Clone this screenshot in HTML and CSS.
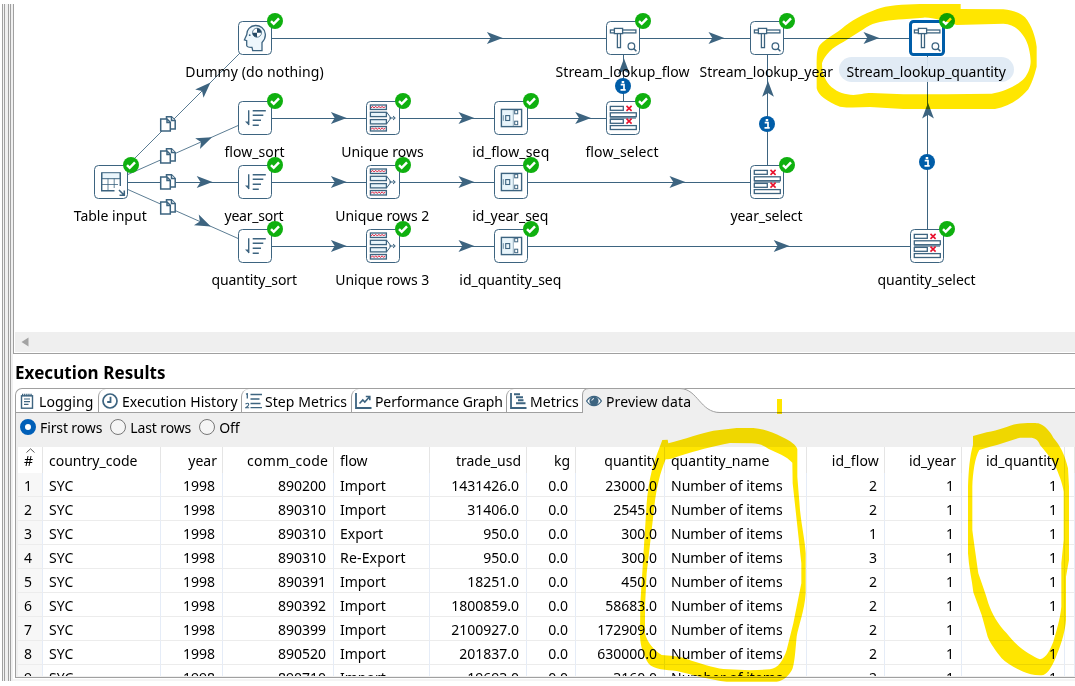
FILE: index.html
```
<!DOCTYPE html>
<html lang="en">
<head>
<meta charset="utf-8">
<title>Execution Results</title>
<link rel="stylesheet" href="styles.css">
</head>
<body>
<div class="app">
  <div class="sash"><i></i><i></i></div>
  <main class="workspace">
    <section class="canvas">
      <svg class="graph" width="1061" height="328" viewBox="14 4 1061 328">
        <defs>
          <g id="ok"><circle r="8" fill="#0fb00f"/><path d="M-4 0.2L-1.3 2.8L4 -2.6" fill="none" stroke="#fff" stroke-width="2.5"/></g>
          <g id="info"><circle r="8" fill="#005da8"/><path d="M-2.3 -1.3H1V3.7M-2.5 3.8H2.7" fill="none" stroke="#fff" stroke-width="1.7"/><rect x="-1.3" y="-5" width="2.5" height="2.2" fill="#fff"/></g>
          <path id="arrow" d="M0 0L-15.8 -5.9L-12 0L-15.8 5.9Z" fill="#3d6480"/>
          <rect id="box" x="-16.5" y="-16.5" width="33" height="33" rx="4" fill="#fff" stroke="#3d6480"/>
          <g id="copy" fill="#fff" stroke="#3d6480" stroke-width="1.5"><path d="M-1.5 -7.2H3.5L7.2 -3.5V5H-1.5Z"/><path d="M3.5 -7V-3.5H7"/><path d="M-7.3 -5H-1L2.3 -1.7V7H-7.3Z"/><path d="M-1 -5V-1.5H2.3" fill="none"/></g>
          <g id="i-table" fill="none" stroke="#3d6480"><rect x="-9.3" y="-9.3" width="18.6" height="6" fill="#eaf5fb"/><path d="M9.3 -9.3V4M-9.3 -9.3V8.8H3.5" stroke-width="1.4"/><path d="M-9 2.5H7M-3 -3.5V8.5M3.2 -3.5V6" stroke-width=".8"/><path d="M8 8L13 13M13.3 8.5V13.3H8.5" stroke-width="1.5"/></g>
          <g id="i-head"><path d="M7 12.6V4.5C9.5 2 10.6 -1 10.3 -4C9.6 -10 5 -12.6 0.5 -12.5C-5 -12.3 -8.3 -8 -8.2 -3.5L-10.6 1.8L-8.3 2.7V7.5Q-8 9.5 -3 9.3L-2.3 12.6Z" fill="#eef7fc" stroke="#3d6480" stroke-width="1.3"/><circle cx="2" cy="-5.3" r="4.5" fill="#fff" stroke="#3d6480" stroke-width=".8"/><path d="M2 -5.3V-9.8A4.5 4.5 0 0 1 6.5 -5.3ZM2 -5.3V-.8A4.5 4.5 0 0 1 -2.5 -5.3Z" fill="#274a65"/><circle cx="-5.3" cy="-2.8" r=".9" fill="#3d6480"/></g>
          <g id="i-sort" stroke="#3d6480" stroke-width="1.4"><path d="M-6.3 -7.8V7M-2.3 -7.3H10.8M-2.3 -2.7H8.3M-2.3 2.3H6M-2.3 7.3H3.8"/><path d="M-10 3.6H-6V7.6Z" fill="#3d6480" stroke="none"/></g>
          <g id="i-unique" fill="#e9f5fb" stroke="#3d6480" stroke-width="1.3"><rect x="-12.6" y="-13" width="16" height="4.5"/><rect x="-12.6" y="-5.7" width="16" height="4.3"/><rect x="-12.6" y="1.6" width="16" height="4.3"/><rect x="-12.6" y="8.5" width="16" height="4.5"/><path d="M-12 -10l1.5 -1.7 1.6 1.7 1.6 -1.7 1.6 1.7 1.6 -1.7 1.6 1.7 1.6 -1.7 1.6 1.7 1.6 -1.7M-12 11.5l1.5 -1.7 1.6 1.7 1.6 -1.7 1.6 1.7 1.6 -1.7 1.6 1.7 1.6 -1.7 1.6 1.7 1.6 -1.7" fill="none" stroke="#e8112d" stroke-width=".9"/><path d="M3.5 -6L8 0L3.5 6M6 0H12M10 -2L12.3 0L10 2" fill="none" stroke-width="1"/></g>
          <g id="i-seq" fill="none" stroke="#3d6480"><path d="M-9 -8H2.5V8H-9Z" fill="#e9f5fb" stroke="none"/><rect x="-9.6" y="-8.6" width="20.2" height="17.2" stroke-width="1.4"/><path d="M2.3 -8V8" stroke-width=".5"/><rect x="-5.3" y="-2.4" width="4" height="4.9" stroke-width="1.1"/><path d="M-7.7 -2.8V2.8" stroke-width=".7"/><rect x="3.7" y="-7.7" width="3" height="3.5"/><rect x="3.7" y="3.2" width="3" height="3.5"/></g>
          <g id="i-select" fill="#fff" stroke="#3d6480" stroke-width="1.3"><path d="M-13 -1H13V1H-13Z" fill="#8ba2b3" stroke="none"/><rect x="-12.7" y="-11.6" width="13" height="3.9"/><rect x="-12.7" y="-5.2" width="26" height="3.9"/><rect x="-12.7" y="1.4" width="13" height="3.9"/><rect x="-12.7" y="7.6" width="26" height="3.9"/><path d="M3.5 -12.1L8.6 -7.2M8.6 -12.1L3.5 -7.2M3.5 .7L8.6 5.6M8.6 .7L3.5 5.6" stroke="#e8112d" stroke-width="1.6"/></g>
          <g id="i-lookup" fill="#fff" stroke="#3d6480" stroke-width="1.3"><rect x="-12.6" y="-8" width="25.5" height="2.9"/><rect x="-8.6" y="-9.6" width="8.2" height="5.2"/><rect x="-5.6" y="-4.4" width="3.1" height="14"/><circle cx="8.4" cy="8.2" r="3.3"/><path d="M10.8 10.6L13.4 13.2" stroke-width="1.5"/></g>
        </defs>

        <g stroke="#3d6480" stroke-width="1">
          <path d="M111 182L255 38M111 182L255 118M111 182L255 246" fill="none" stroke-width=".85"/>
          <path d="M111 182.5H767M255 38.5H927M255 118.5H623M255 246.5H927M623.5 118V38M767.5 182V38M927.5 246V38" fill="none"/>
        </g>
        <use href="#arrow" transform="translate(210.5 82.5) rotate(-45)"/>
        <use href="#arrow" transform="translate(212 137.2) rotate(-24)"/>
        <use href="#arrow" x="212.5" y="182"/>
        <use href="#arrow" transform="translate(210.8 226.4) rotate(24)"/>
        <use href="#arrow" x="502.7" y="38"/><use href="#arrow" x="724.3" y="38"/><use href="#arrow" x="879.3" y="38"/>
        <use href="#arrow" x="346.7" y="118"/><use href="#arrow" x="474.3" y="118"/><use href="#arrow" x="591" y="118"/>
        <use href="#arrow" x="346.7" y="182"/><use href="#arrow" x="474.3" y="182"/><use href="#arrow" x="685.3" y="182"/>
        <use href="#arrow" x="346.7" y="246"/><use href="#arrow" x="474.3" y="246"/><use href="#arrow" x="789.5" y="246"/>
        <use href="#arrow" transform="translate(624 58.5) rotate(-90)"/>
        <use href="#arrow" transform="translate(768 81) rotate(-90)"/>
        <use href="#arrow" transform="translate(928 102.7) rotate(-90)"/>
        <use href="#copy" x="168" y="124"/><use href="#copy" x="168" y="156"/><use href="#copy" x="168" y="182"/><use href="#copy" x="168" y="207"/>
        <use href="#info" x="623" y="86"/><use href="#info" x="767" y="124"/><use href="#info" x="927" y="162"/>

        <rect x="839" y="57" width="175" height="25" rx="12.5" fill="#dfeaf4" fill-opacity=".93"/>
        <g class="node-label">
          <text x="185.3" y="77" textLength="138.4">Dummy (do nothing)</text>
          <text x="555.5" y="77" textLength="134">Stream_lookup_flow</text>
          <text x="699.5" y="77" textLength="133.5">Stream_lookup_year</text>
          <text x="846.5" y="77" textLength="159.5">Stream_lookup_quantity</text>
          <text x="224.5" y="157" textLength="60">flow_sort</text>
          <text x="341.2" y="157" textLength="82.5">Unique rows</text>
          <text x="472.3" y="157" textLength="77">id_flow_seq</text>
          <text x="585.5" y="157" textLength="73">flow_select</text>
          <text x="73.7" y="221" textLength="73">Table input</text>
          <text x="224.5" y="221" textLength="59">year_sort</text>
          <text x="335.3" y="221" textLength="94">Unique rows 2</text>
          <text x="472.3" y="221" textLength="76">id_year_seq</text>
          <text x="730.5" y="221" textLength="72">year_select</text>
          <text x="211.5" y="285" textLength="85.5">quantity_sort</text>
          <text x="335.3" y="285" textLength="94">Unique rows 3</text>
          <text x="459.3" y="285" textLength="102">id_quantity_seq</text>
          <text x="877.5" y="285" textLength="98">quantity_select</text>
        </g>

        <g transform="translate(111 182)"><use href="#box"/><use href="#i-table"/><use href="#ok" x="20" y="-17"/></g>
        <g transform="translate(255 38)"><use href="#box"/><use href="#i-head"/><use href="#ok" x="20" y="-17"/></g>
        <g transform="translate(255 118)"><use href="#box"/><use href="#i-sort"/><use href="#ok" x="20" y="-17"/></g>
        <g transform="translate(255 182)"><use href="#box"/><use href="#i-sort"/><use href="#ok" x="20" y="-17"/></g>
        <g transform="translate(255 246)"><use href="#box"/><use href="#i-sort"/><use href="#ok" x="20" y="-17"/></g>
        <g transform="translate(383 118)"><use href="#box"/><use href="#i-unique"/><use href="#ok" x="20" y="-17"/></g>
        <g transform="translate(383 182)"><use href="#box"/><use href="#i-unique"/><use href="#ok" x="20" y="-17"/></g>
        <g transform="translate(383 246)"><use href="#box"/><use href="#i-unique"/><use href="#ok" x="20" y="-17"/></g>
        <g transform="translate(511 118)"><use href="#box"/><use href="#i-seq"/><use href="#ok" x="20" y="-17"/></g>
        <g transform="translate(511 182)"><use href="#box"/><use href="#i-seq"/><use href="#ok" x="20" y="-17"/></g>
        <g transform="translate(511 246)"><use href="#box"/><use href="#i-seq"/><use href="#ok" x="20" y="-17"/></g>
        <g transform="translate(623 118)"><use href="#box"/><use href="#i-select"/><use href="#ok" x="20" y="-17"/></g>
        <g transform="translate(767 182)"><use href="#box"/><use href="#i-select"/><use href="#ok" x="20" y="-17"/></g>
        <g transform="translate(927 246)"><use href="#box"/><use href="#i-select"/><use href="#ok" x="20" y="-17"/></g>
        <g transform="translate(623 38)"><use href="#box"/><use href="#i-lookup"/><use href="#ok" x="20" y="-17"/></g>
        <g transform="translate(767 38)"><use href="#box"/><use href="#i-lookup"/><use href="#ok" x="20" y="-17"/></g>
        <g transform="translate(927 38)"><rect x="-16.5" y="-16.5" width="33" height="33" rx="3" fill="#fff" stroke="#005da8" stroke-width="3"/><use href="#i-lookup"/><use href="#ok" x="20" y="-17"/></g>
      </svg>
      <div class="scrollbar"><svg width="8" height="10"><path d="M7.5 .5V9.5L0.5 5Z" fill="#a3a3a3"/></svg></div>
    </section>

    <h1 class="title"><span>Execution Results</span></h1>

    <section class="folder">
      <nav class="tabs">
        <div class="tab t-log"><svg width="16" height="16" viewBox="0 0 16 16" fill="none" stroke="#3d6480"><rect x="2.5" y="2.8" width="11" height="12.4" stroke-width="1.4"/><path d="M3 2H13" stroke-width="2.4" stroke-dasharray="1.3 .8"/><path d="M5 6H11M5 8.7H11M5 11.4H9.5" stroke-width="1.2"/></svg><span>Logging</span></div>
        <div class="tab t-hist"><svg width="16" height="16" viewBox="0 0 16 16" fill="none" stroke="#3d6480"><circle cx="8" cy="8" r="7" stroke-width="1.7"/><path d="M8.5 3.8V9H5.2" stroke-width="1.8"/></svg><span>Execution History</span></div>
        <div class="tab t-step"><svg width="17" height="16" viewBox="0 0 17 16" fill="none" stroke="#3d6480" stroke-width="1.3"><path d="M1 1.2L2.3 .8V5.5M5.5 1.5H17M5.5 6H14.5M5.5 10.5H15.5M5.5 14.7H17"/><path d="M.5 11Q3.7 9.2 3.7 11.4Q3.7 12.7 .8 14.7H4.2" stroke-width="1.1"/></svg><span>Step Metrics</span></div>
        <div class="tab t-perf"><svg width="17" height="16" viewBox="0 0 17 16" fill="none" stroke="#3d6480"><path d="M1 0V15H16.5" stroke-width="1.8"/><path d="M4.5 10.5L7.8 7L9.8 9L14.5 3.8M10.8 3.5H14.8V7.2" stroke-width="1.6"/></svg><span>Performance Graph</span></div>
        <div class="tab t-metr"><svg width="17" height="16" viewBox="0 0 17 16" fill="none" stroke="#3d6480"><path d="M1 0V15H16.5" stroke-width="1.8"/><path d="M4 1.2H10M6 4.2H13M8 7.2H13.5M6 10.2H15.5" stroke-width="1.9"/></svg><span>Metrics</span></div>
        <div class="tab t-prev"><svg class="shape" width="139" height="25" viewBox="0 0 139 25"><path d="M.5 25V7Q.5 .5 7 .5H100C116 1 117 24.5 138 24.5V25Z" fill="#efefef"/><path d="M.5 25V7Q.5 .5 7 .5H98C116 1 118 24.5 138 24.5" fill="none" stroke="#a0a0a0"/></svg><svg width="16" height="16" viewBox="0 0 16 16"><path d="M.6 8C4.5 1.8 11.5 1.8 15.4 8C11.5 14.2 4.5 14.2 .6 8Z" fill="#fff" stroke="#3d6480" stroke-width="1.3"/><circle cx="8" cy="8" r="4.6" fill="#3d6480"/><path d="M5.8 7.6Q6 5.7 8 5.6" fill="none" stroke="#fff"/></svg><span>Preview data</span></div>
      </nav>

      <div class="panel">
        <div class="radios">
          <label><i class="radio on"></i><span>First rows</span></label>
          <label><i class="radio"></i><span>Last rows</span></label>
          <label><i class="radio"></i><span>Off</span></label>
        </div>
        <div class="grid-wrap">
          <table class="grid">
            <colgroup><col class="c0"><col class="c1"><col class="c2"><col class="c3"><col class="c4"><col class="c5"><col class="c6"><col class="c7"><col class="c8"><col class="c9"><col class="c10"><col class="c11"><col></colgroup>
            <thead>
              <tr><th class="num">#<svg class="caret" width="9" height="5"><path d="M.5 4.5L4.5 .8L8.5 4.5" fill="none" stroke="#555"/></svg></th><th>country_code</th><th class="r">year</th><th class="r wide">comm_code</th><th>flow</th><th class="r">trade_usd</th><th class="r">kg</th><th class="r">quantity</th><th>quantity_name</th><th class="r wide">id_flow</th><th class="r">id_year</th><th class="r">id_quantity</th><th></th></tr>
            </thead>
            <tbody>
              <tr><td>1</td><td class="cc">SYC</td><td class="r">1998</td><td class="r">890200</td><td>Import</td><td class="r">1431426.0</td><td class="r">0.0</td><td class="r">23000.0</td><td>Number of items</td><td class="r">2</td><td class="r">1</td><td class="r">1</td><td></td></tr>
              <tr><td>2</td><td class="cc">SYC</td><td class="r">1998</td><td class="r">890310</td><td>Import</td><td class="r">31406.0</td><td class="r">0.0</td><td class="r">2545.0</td><td>Number of items</td><td class="r">2</td><td class="r">1</td><td class="r">1</td><td></td></tr>
              <tr><td>3</td><td class="cc">SYC</td><td class="r">1998</td><td class="r">890310</td><td>Export</td><td class="r">950.0</td><td class="r">0.0</td><td class="r">300.0</td><td>Number of items</td><td class="r">1</td><td class="r">1</td><td class="r">1</td><td></td></tr>
              <tr><td>4</td><td class="cc">SYC</td><td class="r">1998</td><td class="r">890310</td><td class="re">Re-Export</td><td class="r">950.0</td><td class="r">0.0</td><td class="r">300.0</td><td>Number of items</td><td class="r">3</td><td class="r">1</td><td class="r">1</td><td></td></tr>
              <tr><td>5</td><td class="cc">SYC</td><td class="r">1998</td><td class="r">890391</td><td>Import</td><td class="r">18251.0</td><td class="r">0.0</td><td class="r">450.0</td><td>Number of items</td><td class="r">2</td><td class="r">1</td><td class="r">1</td><td></td></tr>
              <tr><td>6</td><td class="cc">SYC</td><td class="r">1998</td><td class="r">890392</td><td>Import</td><td class="r">1800859.0</td><td class="r">0.0</td><td class="r">58683.0</td><td>Number of items</td><td class="r">2</td><td class="r">1</td><td class="r">1</td><td></td></tr>
              <tr><td>7</td><td class="cc">SYC</td><td class="r">1998</td><td class="r">890399</td><td>Import</td><td class="r">2100927.0</td><td class="r">0.0</td><td class="r">172909.0</td><td>Number of items</td><td class="r">2</td><td class="r">1</td><td class="r">1</td><td></td></tr>
              <tr><td>8</td><td class="cc">SYC</td><td class="r">1998</td><td class="r">890520</td><td>Import</td><td class="r">201837.0</td><td class="r">0.0</td><td class="r">630000.0</td><td>Number of items</td><td class="r">2</td><td class="r">1</td><td class="r">1</td><td></td></tr>
              <tr><td>9</td><td class="cc">SYC</td><td class="r">1998</td><td class="r">890710</td><td>Import</td><td class="r">19693.0</td><td class="r">0.0</td><td class="r">3160.0</td><td>Number of items</td><td class="r">2</td><td class="r">1</td><td class="r">1</td><td></td></tr>
            </tbody>
          </table>
        </div>
      </div>
    </section>
  </main>
</div>

<!-- Highlighter marks -->
<svg class="marker" width="1075" height="686" viewBox="0 0 1075 686" fill="#ffe600" fill-rule="evenodd">
  <path transform="translate(690 0) scale(.33333)" d="M812 12H690C640 13 590 16 560 28C520 42 480 65 455 86C430 105 395 125 388 137C380 150 380 170 380 200V265C384 285 410 305 450 320C480 325 510 322 540 321L640 327H915C955 320 990 298 1015 268C1030 240 1036 215 1040 200V140C1036 110 1025 75 1005 52C990 38 965 30 940 28L812 27ZM640 58C600 60 560 66 540 76C510 93 490 108 460 126C430 140 403 165 396 190C396 220 406 245 425 262C445 278 465 284 490 285C510 284 520 279 545 279L640 283H770L905 281C940 276 985 255 1003 235C1015 220 1022 200 1022 183C1021 160 1015 130 1003 112C990 90 970 72 940 71L800 75C770 65 720 50 700 53Z"/>
  <path transform="translate(600 420) scale(.33333)" d="M187 60L203 59L205 70C250 58 310 38 340 32L410 24H460C490 26 520 38 545 50C570 62 590 75 592 88V170L600 270C605 320 615 360 617 400V520C614 570 595 620 590 650C586 690 585 720 578 745C570 765 550 784 530 785H380C330 780 280 765 230 753C200 750 160 750 145 730C130 705 122 680 120 650L121 550L128 440L140 250C145 190 155 145 170 105ZM197 118C180 160 170 200 163 260L140 460L135 560V640C140 665 165 695 185 705C210 708 230 706 260 717C300 730 340 744 370 747L450 751L510 748C535 745 550 720 560 690L580 610L604 490V430L590 300L578 190L577 128C560 108 530 98 505 86C490 76 475 70 455 70L390 69C340 78 280 95 250 104C230 110 215 118 197 118Z"/>
  <path transform="translate(840 420) scale(.33333)" d="M399 48L440 37C475 32 510 15 530 12C550 9 580 8 595 10C615 16 630 35 640 53C660 75 675 105 684 145L687 200V420L678 470V600C676 630 665 670 652 700C640 735 625 760 610 765C590 768 565 762 550 755C525 745 500 730 485 715C470 695 450 670 443 650L425 585L400 517C396 480 386 440 384 400V200C386 150 389 110 399 75ZM418 90C405 110 398 160 397 200V330C402 370 408 410 415 460C425 490 435 515 445 550C455 580 475 615 500 640C530 680 570 705 600 718C620 712 630 690 640 665C650 630 660 600 664 560V430L671 360V215C668 190 655 160 645 135C630 110 612 90 600 75C595 60 585 53 570 53H540C510 60 480 75 450 80Z"/>
  <rect x="777" y="399" width="5" height="15"/>
</svg>
</body>
</html>
```

FILE: styles.css
```
* { box-sizing: border-box; }
body {
  margin: 0;
  width: 1075px;
  height: 686px;
  overflow: hidden;
  position: relative;
  background: #fff;
  color: #000;
  font-family: "Noto Sans", "Open Sans", sans-serif;
  font-size: 14px;
}
.app { display: flex; width: 1075px; height: 686px; padding: 4px 0 5px 2px; }
.sash {
  flex: none;
  display: flex;
  justify-content: space-between;
  width: 11px;
  padding-right: 2px;
  background: #f0f0f0;
}
.sash i { width: 3px; border: solid #a0a0a0; border-width: 0 1px; background: #f4f4f4; }
.workspace { flex: 1; min-width: 0; background: #fff; border-bottom: 2px solid #f4f4f4; }
.canvas { height: 350px; border-left: 1px solid #a0a0a0; border-bottom: 1px solid #a0a0a0; }
.graph { display: block; }
.node-label { font-size: 14px; fill: #000; }
.scrollbar { display: flex; align-items: center; height: 20px; margin-left: 1px; padding-left: 6px; background: #efefef; }
.title { margin: 0; padding-left: 2px; height: 34px; display: flex; align-items: center; padding-top: 3px; font-size: 17px; letter-spacing: .07px; }
.folder { margin-left: 2px; height: 290px; border: solid #a0a0a0; border-width: 1px 0 1px 1px; border-top-left-radius: 7px; }
.tabs { display: flex; height: 24px; border-bottom: 1px solid #a0a0a0; }
.tab { position: relative; flex: none; height: 24px; display: flex; align-items: center; white-space: nowrap; padding-left: 3px; gap: 3px; letter-spacing: .06px; }
.tab + .tab:not(.t-prev) { border-left: 1px solid #a0a0a0; border-top-left-radius: 8px; }
.tab svg { flex: none; position: relative; }
.tab span { position: relative; }
.tab .shape { position: absolute; left: 0; top: -1px; }
.t-log { width: 82px; gap: 4px; }
.t-hist { width: 143px; gap: 4px; }
.t-step { width: 110px; }
.t-perf { width: 155px; letter-spacing: -.12px; }
.t-metr { width: 76px; }
.t-prev { width: 139px; padding-left: 4px; gap: 4px; letter-spacing: .1px; }
.panel { height: 264px; background: #efefef; padding-left: 2px; }
.radios { display: flex; height: 34px; padding: 0 0 6px 2px; gap: 8px; }
.radios label { display: flex; align-items: center; gap: 4px; letter-spacing: -.12px; }
.radio { width: 16px; height: 16px; border: 1px solid #777; border-radius: 50%; background: #f5f5f5; }
.radio.on { border: 5px solid #005fb8; background: #fff; }
.grid-wrap { height: 229px; overflow: hidden; background: #fff; }
.grid { table-layout: fixed; width: 1057px; border-collapse: separate; border-spacing: 0; }
.c0 { width: 25px; } .c1 { width: 118px; } .c2 { width: 62px; } .c3 { width: 111px; }
.c4 { width: 96px; } .c5 { width: 97px; } .c6 { width: 49px; } .c7 { width: 89px; }
.c8 { width: 142px; } .c9 { width: 78px; } .c10 { width: 77px; } .c11 { width: 103px; }
th, td { padding: 0 6px; text-align: left; font-weight: 400; white-space: nowrap; overflow: visible; line-height: 20px; }
th { height: 26px; padding-top: 1px; border-right: 1px solid #e5e5e5; }
td { height: 24px; padding-top: 2px; border-right: 1px solid #e5ecf7; border-bottom: 1px solid #ececec; }
th.r { text-align: right; padding-right: 5px; }
td.r { text-align: right; padding-right: 7px; }
th.wide, .re { letter-spacing: .18px; }
td:first-child { background: #f7f7f7; }
.num { position: relative; }
.caret { position: absolute; left: 8px; top: 1px; }
.cc { letter-spacing: .1px; }
.marker { position: absolute; left: 0; top: 0; mix-blend-mode: multiply; pointer-events: none; }
```
